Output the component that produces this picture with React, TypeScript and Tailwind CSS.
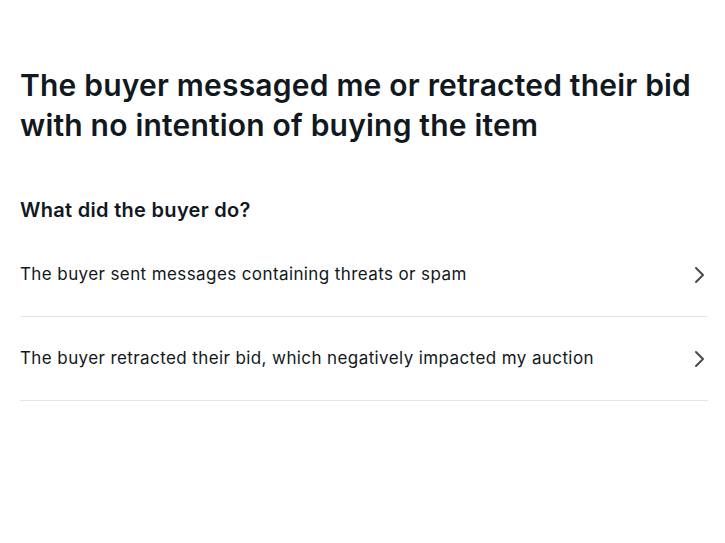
import React from "react";

const options = [
  "The buyer sent messages containing threats or spam",
  "The buyer retracted their bid, which negatively impacted my auction",
];

const Chevron = () => (
  <svg
    className="w-[18px] h-[18px] text-[#4a4a4a]"
    viewBox="0 0 18 18"
    fill="none"
    stroke="currentColor"
    strokeWidth="2"
    strokeLinecap="round"
    strokeLinejoin="round"
  >
    <path d="M6 2l7 7-7 7" />
  </svg>
);

export default function App() {
  return (
    <div className="min-h-screen bg-white text-[#111820] font-['Inter',sans-serif] pl-5 pr-[17px] pt-[65px]">
      <h1 className="text-[30px] leading-[40px] font-semibold tracking-[0.2px] max-w-[692px]">
        The buyer messaged me or retracted their bid with no intention of buying the item
      </h1>
      <h2 className="mt-[52px] text-[20px] leading-[26px] font-semibold tracking-[0.3px]">What did the buyer do?</h2>
      <div className="mt-[10px]">
        {options.map((o) => (
          <button
            key={o}
            className="w-full h-[84px] flex items-center justify-between border-b border-[#e5e5e5] text-left text-[17px] tracking-[0.4px]"
          >
            <span>{o}</span>
            <Chevron />
          </button>
        ))}
      </div>
    </div>
  );
}
